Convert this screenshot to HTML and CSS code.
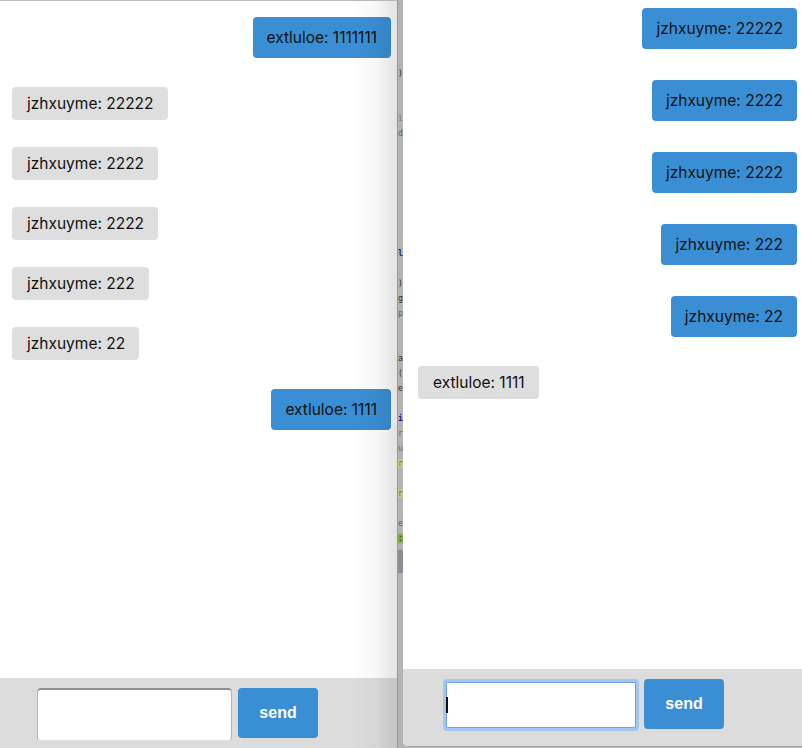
FILE: index.html
```html
<!DOCTYPE html>
<html>
<head>
<meta charset="utf-8">
<title>chat</title>
<link rel="stylesheet" href="styles.css">
</head>
<body>
<div class="desk">
  <section class="win win-left">
    <div class="messages messages-left">
      <div class="bubble mine">extluloe: 1111111</div>
      <div class="bubble theirs">jzhxuyme: 22222</div>
      <div class="bubble theirs">jzhxuyme: 2222</div>
      <div class="bubble theirs">jzhxuyme: 2222</div>
      <div class="bubble theirs">jzhxuyme: 222</div>
      <div class="bubble theirs">jzhxuyme: 22</div>
      <div class="bubble mine">extluloe: 1111</div>
    </div>
    <div class="composer composer-left">
      <input class="field" type="text" aria-label="message">
      <button class="send">send</button>
    </div>
    <div class="shade"></div>
  </section>

  <div class="code-strip">
<pre class="code"><span class="c-dark">)</span>


<span class="c-olive">i</span>
<span class="c-teal">d</span>







<span class="c-navy">l</span>

<span class="c-dark">)</span>
<span class="c-dark">g</span>
<span class="c-teal">p</span>


<span class="c-dark">a</span>
<span class="c-dark">(</span>
<span class="c-dark">e</span>

<span class="c-navy">i</span>
<span class="c-gray">r</span>
<span class="c-gray">u</span>
<span class="c-hl">r</span>

<span class="c-hl">r</span>

<span class="c-teal">e</span>
<span class="c-green">:</span></pre>
    <div class="code-block"></div>
  </div>

  <section class="win win-right">
    <div class="messages messages-right">
      <div class="bubble mine">jzhxuyme: 22222</div>
      <div class="bubble mine">jzhxuyme: 2222</div>
      <div class="bubble mine">jzhxuyme: 2222</div>
      <div class="bubble mine">jzhxuyme: 222</div>
      <div class="bubble mine">jzhxuyme: 22</div>
      <div class="bubble theirs">extluloe: 1111</div>
    </div>
    <div class="composer composer-right">
      <div class="field-wrap">
        <input class="field field-focus" type="text" aria-label="message">
        <span class="caret"></span>
      </div>
      <button class="send">send</button>
    </div>
  </section>
</div>
</body>
</html>
```

FILE: styles.css
```css
* { box-sizing: border-box; }

html, body {
  margin: 0;
  padding: 0;
  background: #b4b4b4;
}

body {
  font-family: Inter, "Liberation Sans", Arial, sans-serif;
  color: #111;
}

.desk {
  display: flex;
  width: 802px;
  height: 748px;
  overflow: hidden;
}

.win {
  position: relative;
  display: flex;
  flex-direction: column;
  background: #fff;
}

.win-left {
  width: 397px;
  height: 748px;
  border-top: 1px solid #b9b9b9;
}

.win-right {
  width: 399px;
  height: 747px;
  border-bottom: 1px solid #a9a9a9;
  border-bottom-left-radius: 5px;
  overflow: hidden;
}

.messages {
  flex: 1;
  display: flex;
  flex-direction: column;
  gap: 27px;
}

.messages-left { padding: 14px 6px 0 12px; }
.messages-right { padding: 6px 5px 0 15px; }

.bubble {
  font-size: 15.5px;
  line-height: 19px;
  border-radius: 4px;
  white-space: nowrap;
}

.mine {
  align-self: flex-end;
  background: #3a8fd4;
  padding: 11px 14px;
  margin: 2px 0;
  color: #111;
}

.theirs {
  align-self: flex-start;
  background: #dedede;
  padding: 7px 14px 7px 15px;
  color: #111;
}

.composer {
  display: flex;
  align-items: flex-start;
  background: #dcdcdc;
}

.composer-left {
  height: 70px;
  padding: 10px 0 0 37px;
  gap: 6px;
}

.composer-right {
  height: 77px;
  padding: 10px 0 0 40px;
  gap: 5px;
}

.field {
  display: block;
  width: 195px;
  height: 53px;
  margin: 0;
  background: #fff;
  border: 1px solid #b3b3b3;
  border-top: 2px solid #8f8f8f;
  border-bottom-color: #e2e2e2;
  border-radius: 4px;
  outline: none;
  font: 16px "Liberation Sans", Arial, sans-serif;
}

.field-wrap {
  position: relative;
}

.field-focus {
  width: 196px;
  height: 52px;
  border: 3px solid #a3c5f2;
  box-shadow: inset 0 0 0 1px #6f9fe4;
  border-radius: 4px;
}

.caret {
  position: absolute;
  left: 3px;
  top: 18px;
  width: 2px;
  height: 16px;
  background: #111;
}

.send {
  width: 80px;
  height: 50px;
  margin: 0;
  padding: 0;
  border: none;
  border-radius: 4px;
  background: #3a8fd4;
  color: #fff;
  font: bold 16px "Liberation Sans", Arial, sans-serif;
}

.shade {
  position: absolute;
  top: 0;
  right: 0;
  bottom: 0;
  width: 46px;
  background: linear-gradient(to right, rgba(0,0,0,0) 0%, rgba(0,0,0,0.03) 55%, rgba(0,0,0,0.11) 100%);
  pointer-events: none;
}

.code-strip {
  width: 6px;
  height: 748px;
  background: #b3b3b3;
  border-left: 1px solid #999;
  overflow: hidden;
}

.code {
  margin: 0;
  padding: 66px 0 0 0;
  font: 8px/15px "DejaVu Sans Mono", monospace;
  color: #333;
}

.c-dark { color: #2a2a2a; }
.c-olive { color: #7b7b4a; }
.c-teal { color: #2e6f80; }
.c-navy { color: #1b1b8c; font-weight: bold; }
.c-gray { color: #6a6a6a; }
.c-hl { color: #6e6e40; background: #c9c58a; }
.c-green { color: #224422; background: #7fa844; }

.code-block {
  margin-top: 4px;
  height: 23px;
  background: #8c8e96;
}
```
